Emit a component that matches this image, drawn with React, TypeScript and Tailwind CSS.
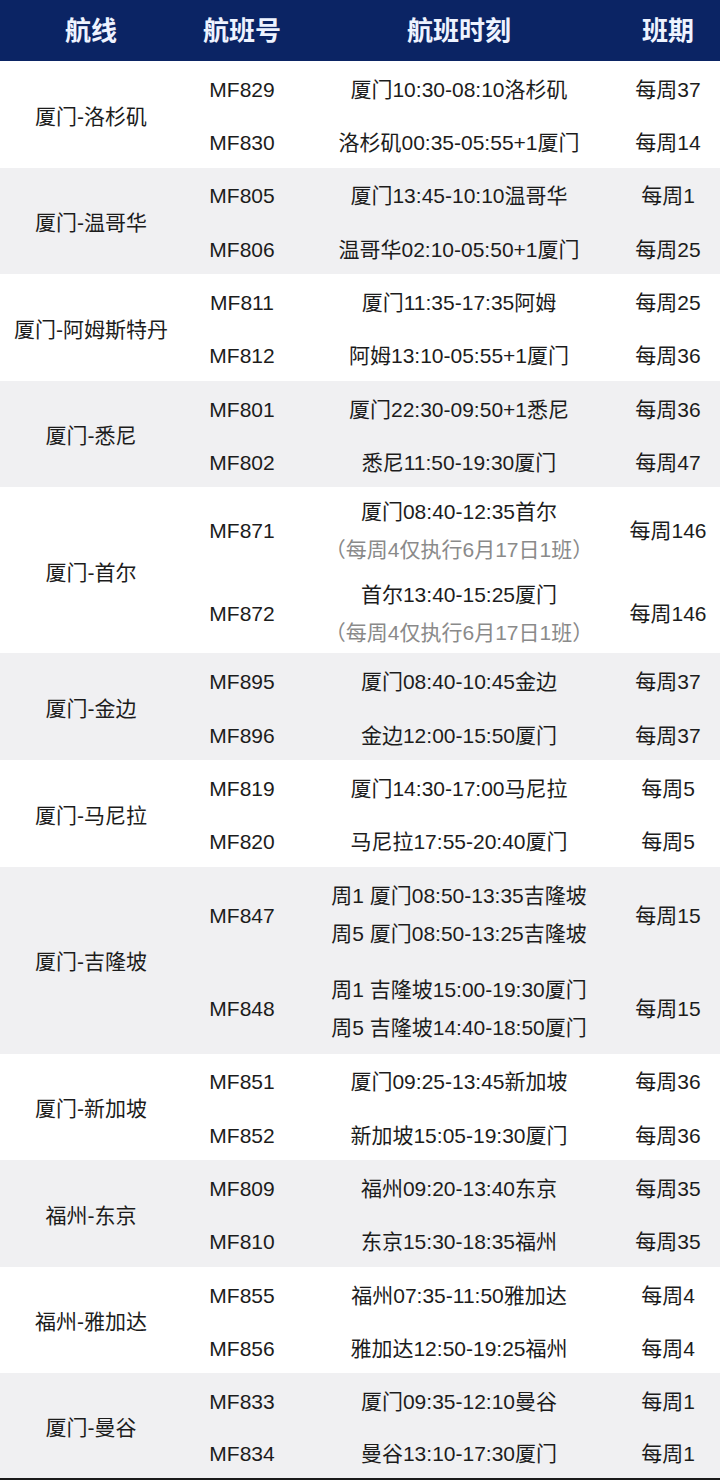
type Flight = {
  no: string
  lines: string[]
  note?: string
  days: string
}

type Group = {
  route: string
  rowH: string
  flights: Flight[]
}

const NOTE = "（每周4仅执行6月17日1班）"

const groups: Group[] = [
  {
    route: "厦门-洛杉矶",
    rowH: "h-[53.3px]",
    flights: [
      { no: "MF829", lines: ["厦门10:30-08:10洛杉矶"], days: "每周37" },
      { no: "MF830", lines: ["洛杉矶00:35-05:55+1厦门"], days: "每周14" },
    ],
  },
  {
    route: "厦门-温哥华",
    rowH: "h-[53.3px]",
    flights: [
      { no: "MF805", lines: ["厦门13:45-10:10温哥华"], days: "每周1" },
      { no: "MF806", lines: ["温哥华02:10-05:50+1厦门"], days: "每周25" },
    ],
  },
  {
    route: "厦门-阿姆斯特丹",
    rowH: "h-[53.3px]",
    flights: [
      { no: "MF811", lines: ["厦门11:35-17:35阿姆"], days: "每周25" },
      { no: "MF812", lines: ["阿姆13:10-05:55+1厦门"], days: "每周36" },
    ],
  },
  {
    route: "厦门-悉尼",
    rowH: "h-[53.3px]",
    flights: [
      { no: "MF801", lines: ["厦门22:30-09:50+1悉尼"], days: "每周36" },
      { no: "MF802", lines: ["悉尼11:50-19:30厦门"], days: "每周47" },
    ],
  },
  {
    route: "厦门-首尔",
    rowH: "h-[83px]",
    flights: [
      { no: "MF871", lines: ["厦门08:40-12:35首尔"], note: NOTE, days: "每周146" },
      { no: "MF872", lines: ["首尔13:40-15:25厦门"], note: NOTE, days: "每周146" },
    ],
  },
  {
    route: "厦门-金边",
    rowH: "h-[53.3px]",
    flights: [
      { no: "MF895", lines: ["厦门08:40-10:45金边"], days: "每周37" },
      { no: "MF896", lines: ["金边12:00-15:50厦门"], days: "每周37" },
    ],
  },
  {
    route: "厦门-马尼拉",
    rowH: "h-[53.3px]",
    flights: [
      { no: "MF819", lines: ["厦门14:30-17:00马尼拉"], days: "每周5" },
      { no: "MF820", lines: ["马尼拉17:55-20:40厦门"], days: "每周5" },
    ],
  },
  {
    route: "厦门-吉隆坡",
    rowH: "h-[93.5px]",
    flights: [
      {
        no: "MF847",
        lines: ["周1 厦门08:50-13:35吉隆坡", "周5 厦门08:50-13:25吉隆坡"],
        days: "每周15",
      },
      {
        no: "MF848",
        lines: ["周1 吉隆坡15:00-19:30厦门", "周5 吉隆坡14:40-18:50厦门"],
        days: "每周15",
      },
    ],
  },
  {
    route: "厦门-新加坡",
    rowH: "h-[53.3px]",
    flights: [
      { no: "MF851", lines: ["厦门09:25-13:45新加坡"], days: "每周36" },
      { no: "MF852", lines: ["新加坡15:05-19:30厦门"], days: "每周36" },
    ],
  },
  {
    route: "福州-东京",
    rowH: "h-[53.3px]",
    flights: [
      { no: "MF809", lines: ["福州09:20-13:40东京"], days: "每周35" },
      { no: "MF810", lines: ["东京15:30-18:35福州"], days: "每周35" },
    ],
  },
  {
    route: "福州-雅加达",
    rowH: "h-[53.3px]",
    flights: [
      { no: "MF855", lines: ["福州07:35-11:50雅加达"], days: "每周4" },
      { no: "MF856", lines: ["雅加达12:50-19:25福州"], days: "每周4" },
    ],
  },
  {
    route: "厦门-曼谷",
    rowH: "h-[52.5px]",
    flights: [
      { no: "MF833", lines: ["厦门09:35-12:10曼谷"], days: "每周1" },
      { no: "MF834", lines: ["曼谷13:10-17:30厦门"], days: "每周1" },
    ],
  },
]

function FlightRow({ f, rowH }: { f: Flight; rowH: string }) {
  const multi = f.lines.length > 1 || !!f.note
  return (
    <div className={`flex items-center pt-[4px] ${rowH}`}>
      <div className="w-[120px] text-center">{f.no}</div>
      <div className={`w-[314px] flex flex-col items-center ${multi ? "leading-[38px]" : ""}`}>
        {f.lines.map((l) => (
          <div key={l} className="whitespace-nowrap">
            {l}
          </div>
        ))}
        {f.note && <div className="whitespace-nowrap text-[#8a8a8a]">{f.note}</div>}
      </div>
      <div className="flex-1 text-center">{f.days}</div>
    </div>
  )
}

export default function App() {
  return (
    <div
      className="w-[720px] bg-white text-[21px] text-[#1c1c1c]"
      style={{ fontFamily: '"Liberation Sans", "Noto Sans CJK SC", sans-serif' }}
    >
      {/* Header */}
      <div className="flex h-[61px] items-center pt-[2px] bg-[#0b2464] text-[26px] font-bold text-[#eef3ff]">
        <div className="w-[182px] text-center">航线</div>
        <div className="w-[120px] text-center">航班号</div>
        <div className="w-[314px] text-center">航班时刻</div>
        <div className="flex-1 text-center">班期</div>
      </div>

      <div className="border-b-2 border-[#1a1a1a]">
        {groups.map((g, i) => (
          <div key={g.route} className={`flex ${i % 2 === 1 ? "bg-[#f0f0f2]" : "bg-white"}`}>
            <div className="flex w-[182px] items-center justify-center whitespace-nowrap pt-[4px]">{g.route}</div>
            <div className="flex-1">
              {g.flights.map((f) => (
                <FlightRow key={f.no} f={f} rowH={g.rowH} />
              ))}
            </div>
          </div>
        ))}
      </div>
    </div>
  )
}
